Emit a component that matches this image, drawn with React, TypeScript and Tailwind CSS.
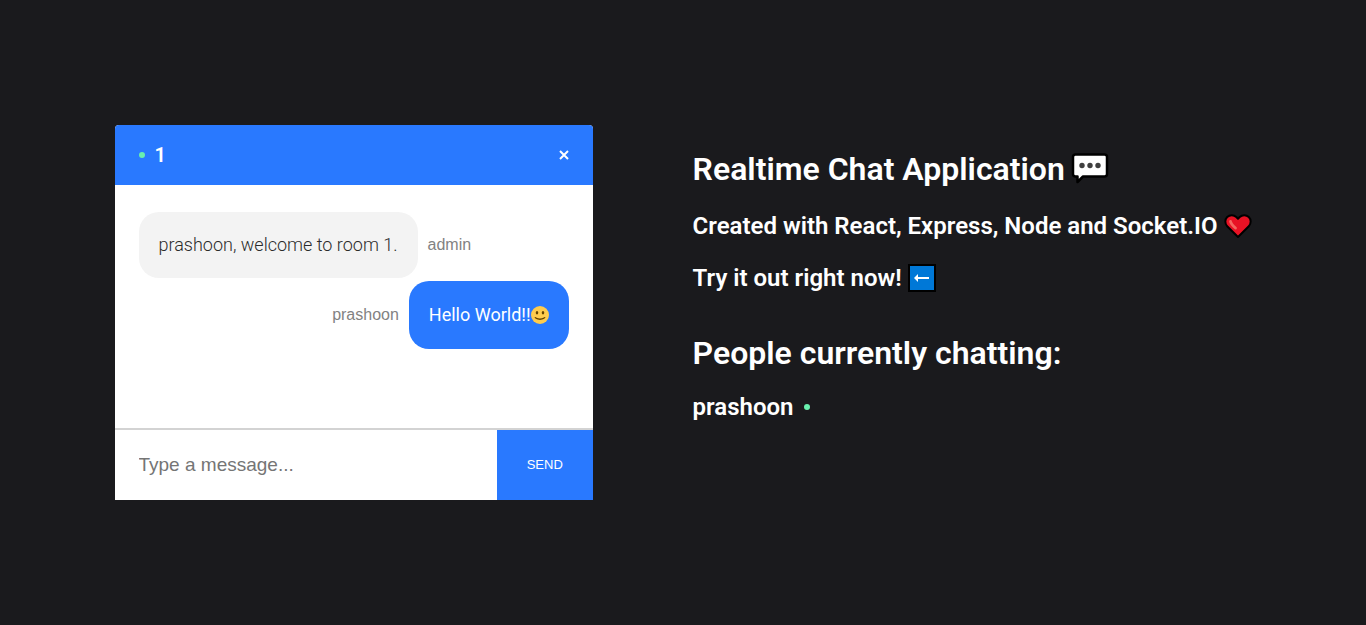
import { useState } from "react";

const room = "1";

function SpeechBubble() {
  return (
    <svg viewBox="0 0 38 34" className="h-[34px] w-[38px] shrink-0" aria-hidden="true">
      <path
        d="M4.500 2.500h29c1.500 0 2.500 1 2.500 2.500v17c0 1.500-1 2.500-2.500 2.500H12L6.500 30v-5.500h-2C3 24.500 2 23.500 2 22V5c0-1.500 1-2.500 2.500-2.500z"
        fill="#fff"
        stroke="#000"
        strokeWidth="2.500"
        strokeLinejoin="round"
      />
      <circle cx="11" cy="13.500" r="2.700" fill="#3f3f3f" />
      <circle cx="19" cy="13.500" r="2.700" fill="#3f3f3f" />
      <circle cx="27" cy="13.500" r="2.700" fill="#3f3f3f" />
    </svg>
  );
}

function Heart() {
  return (
    <svg viewBox="0 0 28 26" className="h-[26px] w-7 shrink-0" aria-hidden="true">
      <path
        d="M14 24 3.200 13.200C.7 10.600.7 6.500 3.200 4c2.500-2.500 6.600-2.500 9.100 0L14 5.700 15.700 4c2.500-2.500 6.600-2.500 9.100 0 2.500 2.500 2.500 6.600 0 9.200z"
        fill="#e81224"
        stroke="#000"
        strokeWidth="2"
        strokeLinejoin="round"
      />
      <path d="M6.500 8.500c.3 2 1.500 3.500 5 6.500" fill="none" stroke="#f4655f" strokeWidth="2.800" strokeLinecap="round" />
    </svg>
  );
}

function LeftArrow() {
  return (
    <svg viewBox="0 0 28 28" className="size-7 shrink-0" aria-hidden="true">
      <rect x="1" y="1" width="26" height="26" fill="#0078d7" stroke="#000" strokeWidth="2" />
      <path d="M9.500 14H21" stroke="#fff" strokeWidth="2" />
      <path d="M6 14l4-4v8z" fill="#fff" />
    </svg>
  );
}

function Smile() {
  return (
    <svg viewBox="0 0 36 36" className="size-[18px] shrink-0" role="img" aria-label="smile">
      <circle cx="18" cy="18" r="18" fill="#ffcc4d" />
      <ellipse cx="12" cy="13.500" rx="2.500" ry="3.500" fill="#664500" />
      <ellipse cx="24" cy="13.500" rx="2.500" ry="3.500" fill="#664500" />
      <path
        d="M28.500 22.200c-.3-.4-.9-.5-1.300-.2C27.100 22.100 23 25 18 25s-9.100-2.900-9.200-3c-.4-.3-1-.2-1.300.2-.3.4-.3 1 .1 1.400C7.800 23.800 11.500 28 18 28s10.200-4.200 10.400-4.400c.4-.4.4-1 .1-1.400z"
        fill="#664500"
      />
    </svg>
  );
}

function OnlineDot() {
  return <span className="size-1.5 shrink-0 rounded-full bg-[#69f0ae]" />;
}

function ChatPanel() {
  const [text, setText] = useState("");
  return (
    <section className="flex h-[60vh] w-[35%] flex-col rounded-t bg-white">
      <header className="flex h-[60px] shrink-0 items-center justify-between rounded-t bg-[#2979ff] px-6">
        <div className="flex items-center gap-2.5">
          <OnlineDot />
          <h3 className="text-xl font-semibold text-white">{room}</h3>
        </div>
        <a href="/" aria-label="Leave room" className="text-white">
          <svg viewBox="0 0 10 10" className="size-[10px]" aria-hidden="true">
            <path d="M1 1l8 8M9 1L1 9" stroke="currentColor" strokeWidth="2" />
          </svg>
        </a>
      </header>
      <div className="flex min-h-0 flex-auto flex-col gap-[3px] overflow-hidden px-6 pt-[27px]">
        <div className="flex items-center gap-2.5">
          <p className="rounded-[20px] bg-[#f3f3f3] px-5 py-[21px] text-lg leading-6 font-light text-[#2b2b2b]">
            prashoon, welcome to room 1.
          </p>
          <p className="font-['Liberation_Sans',sans-serif] text-base text-[#828282]">admin</p>
        </div>
        <div className="flex items-center justify-end gap-2.5">
          <p className="font-['Liberation_Sans',sans-serif] text-base text-[#828282]">prashoon</p>
          <p className="flex items-center rounded-[20px] bg-[#2979ff] px-5 py-[22px] text-lg leading-6 text-white">
            Hello World!!
            <Smile />
          </p>
        </div>
      </div>
      <form
        className="flex shrink-0 border-t-2 border-[#d3d3d3] font-['Liberation_Sans',sans-serif]"
        onSubmit={(e) => {
          e.preventDefault();
          setText("");
        }}
      >
        <input
          type="text"
          aria-label="Message"
          placeholder="Type a message..."
          value={text}
          onChange={(e) => setText(e.target.value)}
          className="h-[70px] w-4/5 px-6 text-[19px] outline-none placeholder:text-[#757575]"
        />
        <button type="submit" className="w-1/5 bg-[#2979ff] text-[13px] text-white">
          SEND
        </button>
      </form>
    </section>
  );
}

export default function App() {
  return (
    <main className="flex min-h-screen items-center justify-center gap-[100px] bg-[#1a1a1d] font-[Roboto,sans-serif]">
      <ChatPanel />
      <section className="pb-[54px] font-semibold text-white">
        <h1 className="flex items-center gap-1.5 text-[32px] leading-[38px]">
          Realtime Chat Application <SpeechBubble />
        </h1>
        <h2 className="mt-6 flex items-center gap-1.5 text-2xl leading-7">
          Created with React, Express, Node and Socket.IO <Heart />
        </h2>
        <h2 className="mt-6 flex items-center gap-1.5 text-2xl leading-7">
          Try it out right now! <LeftArrow />
        </h2>
        <h1 className="mt-[42px] text-[32px] leading-[38px]">People currently chatting:</h1>
        <h2 className="mt-[21px] flex items-center gap-2.5 text-2xl leading-7">
          prashoon <OnlineDot />
        </h2>
      </section>
    </main>
  );
}
